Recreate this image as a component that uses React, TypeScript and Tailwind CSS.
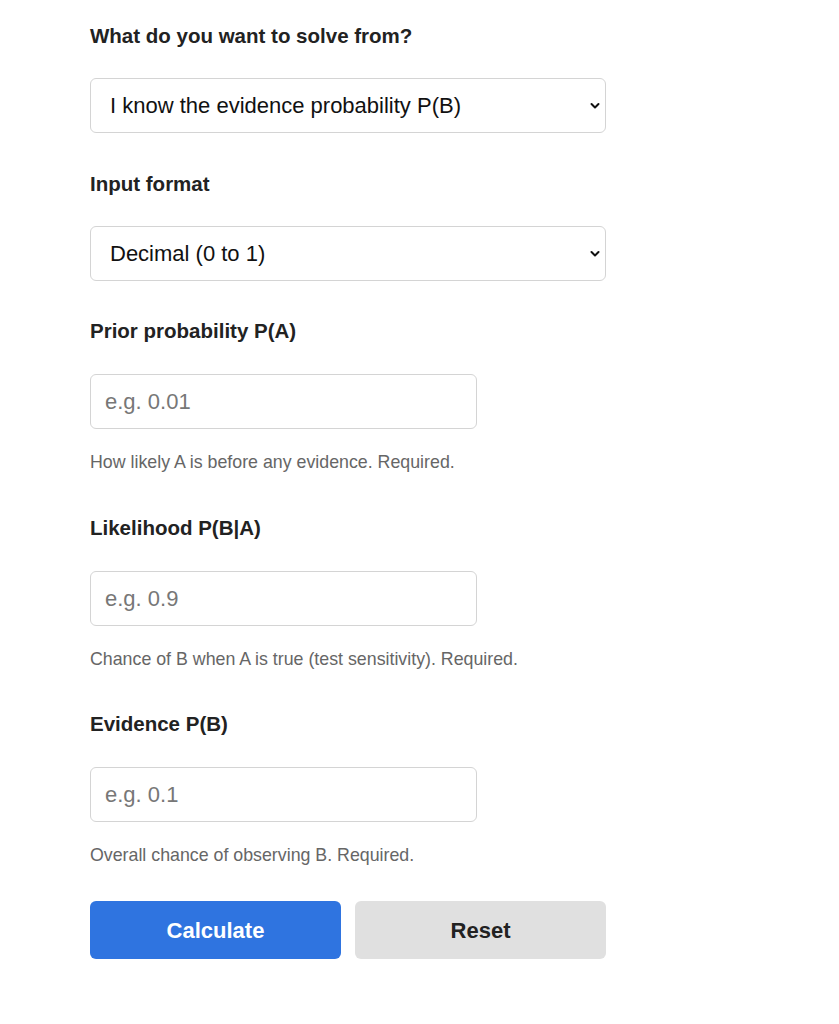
import React from "react"

const font = { fontFamily: '"Liberation Sans", Arial, sans-serif' }

function Chevron() {
  return (
    <svg
      className="pointer-events-none absolute right-[6px] top-1/2 -translate-y-1/2"
      width="10"
      height="7"
      viewBox="0 0 10 7"
      fill="none"
    >
      <path d="M1.5 1.5 L5 5 L8.5 1.5" stroke="#111" strokeWidth="2" strokeLinecap="round" strokeLinejoin="round" />
    </svg>
  )
}

function SelectField({ label, value, className }: { label: string; value: string; className?: string }) {
  return (
    <div className={className}>
      <label className="block text-[20.5px] leading-[30px] font-bold text-[#222]">{label}</label>
      <div className="relative mt-[27px] w-[516px]">
        <select
          defaultValue={value}
          className="w-full h-[55px] appearance-none rounded-[6px] border border-[#d4d4d4] bg-white pl-[19px] pr-8 text-[22px] text-[#111] outline-none"
          style={font}
        >
          <option>{value}</option>
        </select>
        <Chevron />
      </div>
    </div>
  )
}

function NumberField({
  label,
  placeholder,
  help,
  className,
}: {
  label: string
  placeholder: string
  help: string
  className?: string
}) {
  return (
    <div className={className}>
      <label className="block text-[20.5px] leading-[30px] font-bold text-[#222]">{label}</label>
      <input
        type="text"
        placeholder={placeholder}
        className="mt-[28px] block w-[387px] h-[55px] rounded-[6px] border border-[#d4d4d4] bg-white px-[14px] text-[22px] text-[#111] placeholder:text-[#777] outline-none"
        style={font}
      />
      <p className="mt-[20px] text-[17.8px] leading-[27px] text-[#666]">{help}</p>
    </div>
  )
}

export default function App() {
  return (
    <div className="min-h-screen bg-white" style={font}>
      <div className="pl-[90px] pt-[21px]">
        <SelectField label="What do you want to solve from?" value="I know the evidence probability P(B)" />
        <SelectField className="mt-[36px]" label="Input format" value="Decimal (0 to 1)" />

        <NumberField
          className="mt-[35px]"
          label="Prior probability P(A)"
          placeholder="e.g. 0.01"
          help="How likely A is before any evidence. Required."
        />
        <NumberField
          className="mt-[37px]"
          label="Likelihood P(B|A)"
          placeholder="e.g. 0.9"
          help="Chance of B when A is true (test sensitivity). Required."
        />
        <NumberField
          className="mt-[36px]"
          label="Evidence P(B)"
          placeholder="e.g. 0.1"
          help="Overall chance of observing B. Required."
        />

        <div className="mt-[32px] flex gap-[14px] w-[516px]">
          <button className="flex-1 h-[58px] rounded-[6px] bg-[#2f74e0] text-white text-[22px] font-bold" style={font}>
            Calculate
          </button>
          <button className="flex-1 h-[58px] rounded-[6px] bg-[#e0e0e0] text-[#222] text-[22px] font-bold" style={font}>
            Reset
          </button>
        </div>
      </div>
    </div>
  )
}
